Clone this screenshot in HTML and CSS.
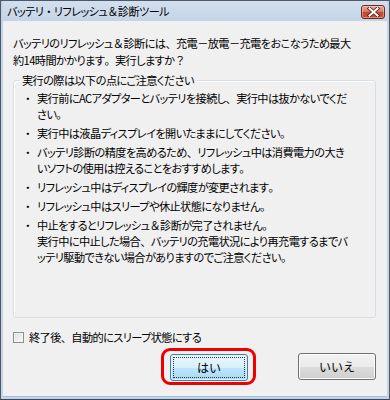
FILE: index.html
```html
<!DOCTYPE html>
<html lang="ja">
<head>
<meta charset="utf-8">
<link rel="stylesheet" href="styles.css">
</head>
<body>
<div class="window">
  <div class="titlebar">
    <span class="title">バッテリ<span class="fw">・</span>リフレッシュ<span class="fw">＆</span>診断ツール</span>
    <button class="close" aria-label="閉じる">
      <svg width="13" height="10" viewBox="0 0 13 10">
        <path d="M2.5 1.5 L10.5 8.5 M10.5 1.5 L2.5 8.5" stroke="#5a1a10" stroke-width="3.6" stroke-linecap="square"/>
        <path d="M2.5 1.5 L10.5 8.5 M10.5 1.5 L2.5 8.5" stroke="#ffffff" stroke-width="2" stroke-linecap="square"/>
      </svg>
    </button>
  </div>
  <div class="content">
    <p class="intro">バッテリのリフレッシュ<span class="fw">＆</span>診断には<span class="fw">、</span>充電<span class="fw">－</span>放電<span class="fw">－</span>充電をおこなうため最大<br>約14時間かかります<span class="fw">。</span>実行しますか<span class="fw">？</span></p>
    <div class="group">
      <div class="legend">実行の際は以下の点にご注意ください</div>
      <ul class="notes">
        <li><span class="dot">・</span><span>実行前にACアダプターとバッテリを接続し<span class="fw">、</span>実行中は抜かないでくだ<br>さい<span class="fw">。</span></span></li>
        <li><span class="dot">・</span><span>実行中は液晶ディスプレイを開いたままにしてください<span class="fw">。</span></span></li>
        <li><span class="dot">・</span><span>バッテリ診断の精度を高めるため<span class="fw">、</span>リフレッシュ中は消費電力の大き<br>いソフトの使用は控えることをおすすめします<span class="fw">。</span></span></li>
        <li><span class="dot">・</span><span>リフレッシュ中はディスプレイの輝度が変更されます<span class="fw">。</span></span></li>
        <li><span class="dot">・</span><span>リフレッシュ中はスリープや休止状態になりません<span class="fw">。</span></span></li>
        <li><span class="dot">・</span><span>中止をするとリフレッシュ<span class="fw">＆</span>診断が完了されません<span class="fw">。</span><br>実行中に中止した場合<span class="fw">、</span>バッテリの充電状況により再充電するまでバ<br>ッテリ駆動できない場合がありますのでご注意ください<span class="fw">。</span></span></li>
      </ul>
    </div>
    <label class="check"><span class="box"></span><span>終了後<span class="fw">、</span>自動的にスリープ状態にする</span></label>
    <div class="buttons">
      <div class="highlight"><button class="btn primary"><span class="focus">はい</span></button></div>
      <button class="btn">いいえ</button>
    </div>
  </div>
</div>
</body>
</html>
```
FILE: styles.css
```css
* { box-sizing: border-box; }
html, body { margin: 0; padding: 0; }
body {
  width: 390px;
  height: 400px;
  overflow: hidden;
  background: #ffffff;
  font-family: "Noto Sans CJK JP", "Noto Sans", sans-serif;
  font-size: 11.2px;
  letter-spacing: -0.6px;
  color: #000;
  font-feature-settings: "palt";
}
.fw { font-feature-settings: normal; }
.window {
  width: 390px;
  height: 400px;
  display: flex;
  flex-direction: column;
  background: #c4d4e8;
  border: 1px solid #4f5966;
  border-bottom-color: #3e4650;
  padding: 0 2px 2px 2px;
}
.titlebar {
  height: 20px;
  flex: none;
  display: flex;
  align-items: center;
  justify-content: space-between;
  background: linear-gradient(#d3dfee, #c4d4e8);
  padding: 0 2px 0 4px;
}
.title {
  line-height: 16px;
  color: #000;
}
.close {
  width: 24px;
  height: 14px;
  margin-top: 2px;
  padding: 0;
  border: 1px solid #6b2a1f;
  border-radius: 3px;
  background: linear-gradient(#e9a99b 0%, #d77b66 45%, #c2452c 55%, #c9553a 100%);
  box-shadow: inset 0 0 0 1px rgba(255,255,255,0.35);
  display: flex;
  align-items: center;
  justify-content: center;
}
.content {
  flex: 1;
  background: #f0f0f0;
  border-bottom: 1px solid #9bc1e6;
  padding: 14px 10px 0 10px;
  display: flex;
  flex-direction: column;
}
.intro {
  margin: 0;
  line-height: 17px;
  white-space: nowrap;
}
.group {
  position: relative;
  margin-top: 11px;
  height: 238px;
  border: 1px solid #d5dfe5;
  border-radius: 3px;
  box-shadow: inset 1px 1px 0 #fff;
  margin-right: 1px;
}
.legend {
  position: absolute;
  top: -9px;
  left: 6px;
  padding: 0 2px;
  background: #f0f0f0;
  line-height: 16px;
}
.notes {
  list-style: none;
  margin: 0;
  padding: 9px 0 0 11px;
  display: flex;
  flex-direction: column;
  gap: 3px;
}
.notes li {
  display: flex;
  line-height: 16px;
  white-space: nowrap;
}
.dot {
  width: 12px;
  flex: none;
}
.check {
  display: flex;
  align-items: center;
  gap: 5px;
  margin-top: 11px;
  line-height: 16px;
}
.box {
  width: 11px;
  height: 11px;
  border: 1px solid #8e8f8f;
  background: linear-gradient(135deg, #dcdcdc, #fbfbfb);
  box-shadow: inset 0 0 0 1px #f4f4f4;
}
.buttons {
  display: flex;
  justify-content: space-between;
  align-items: center;
  margin-top: 3px;
  padding-left: 148px;
  padding-right: 1px;
}
.highlight {
  border: 3px solid #ee0000;
  border-radius: 9px;
  padding: 3px 5px 1px 6px;
}
.btn {
  width: 78px;
  height: 27px;
  font-family: inherit;
  font-size: 12px;
  letter-spacing: 0;
  color: #000;
  border: 1px solid #707070;
  border-radius: 3px;
  background: linear-gradient(#f2f2f2 0%, #ebebeb 50%, #dddddd 51%, #cfcfcf 100%);
  box-shadow: inset 0 0 0 1px #fcfcfc;
  padding: 0;
}
.btn.primary {
  border-color: #3c7fb1;
  background: linear-gradient(#eaf6fd 0%, #d9f0fc 50%, #bee6fd 51%, #a7d9f5 100%);
  box-shadow: inset 0 0 0 1px #dff2fc;
  padding: 2px;
}
.focus {
  display: flex;
  align-items: center;
  justify-content: center;
  width: 100%;
  height: 100%;
  border: 1px dotted #333;
}
```
